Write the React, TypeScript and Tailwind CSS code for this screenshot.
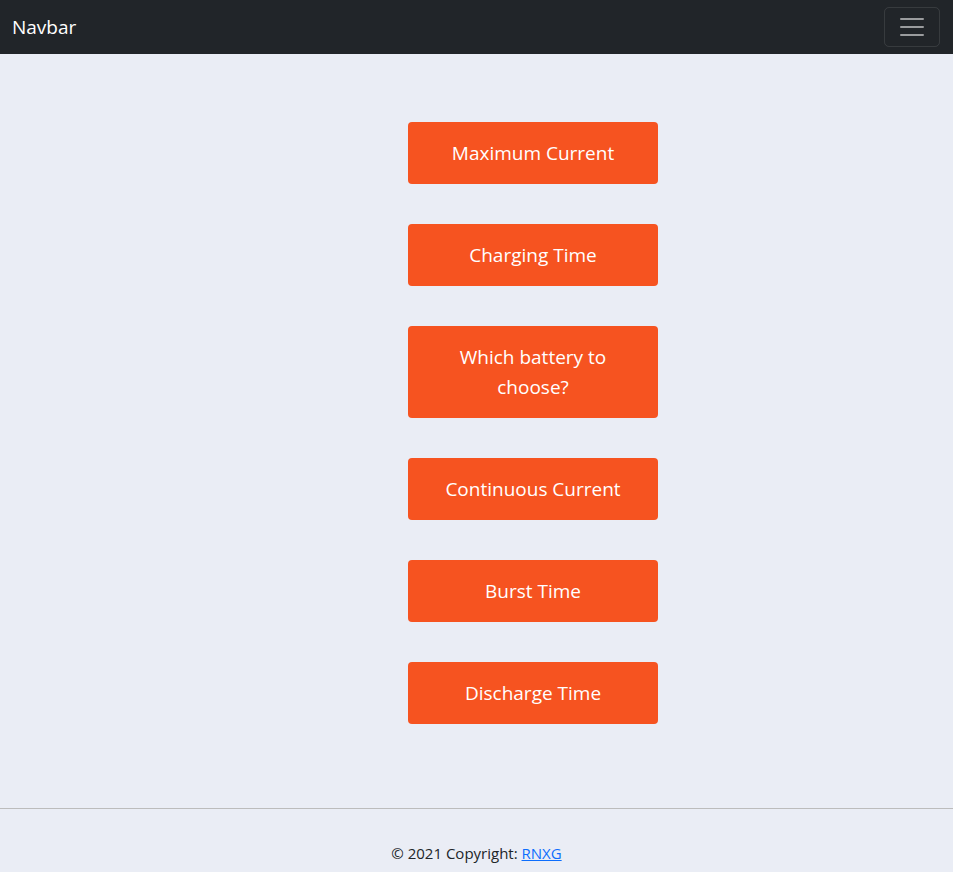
const items = [
  "Maximum Current",
  "Charging Time",
  "Which battery to choose?",
  "Continuous Current",
  "Burst Time",
  "Discharge Time",
];

export default function App() {
  return (
    <div className="min-h-[872px] bg-[#eaedf5] font-['Open_Sans',sans-serif] text-[#212529]">
      <nav className="flex h-[54px] items-center justify-between bg-[#212529] pl-3 pr-[13px]">
        <a href="#" className="text-[19px] leading-[30px] text-white">
          Navbar
        </a>
        <button className="flex h-[40px] w-[56px] items-center justify-center rounded-[5px] border border-white/10">
          <svg width="30" height="30" viewBox="0 0 30 30">
            <path
              d="M4 7h22M4 15h22M4 23h22"
              stroke="rgba(255,255,255,0.55)"
              strokeWidth="2"
              strokeLinecap="round"
            />
          </svg>
        </button>
      </nav>

      <main className="flex flex-col gap-10 pb-[84px] pl-[408px] pt-[68px]">
        {items.map((label) => (
          <button
            key={label}
            className="w-[250px] rounded-[4px] bg-[#f65320] px-6 py-4 text-center text-[19px] leading-[30px] text-white"
          >
            {label}
          </button>
        ))}
      </main>

      <hr className="border-t border-[#bcbcbc]" />

      <footer className="pb-1 pt-[32px] text-center text-[15px] leading-6">
        © 2021 Copyright:{" "}
        <a href="#" className="text-[#0d6efd] underline">
          RNXG
        </a>
      </footer>
    </div>
  );
}
